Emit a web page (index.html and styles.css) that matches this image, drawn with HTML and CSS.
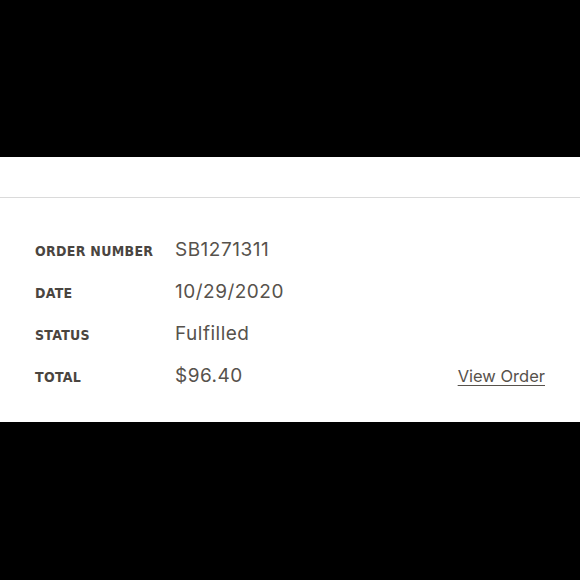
FILE: index.html
```html
<!DOCTYPE html>
<html>
<head>
<meta charset="utf-8">
<link rel="stylesheet" href="styles.css">
</head>
<body>
<div class="top"></div>
<section class="card">
  <div class="card-head"></div>
  <div class="details">
    <div class="label">Order Number</div><div class="value">SB1271311</div><div class="action"></div>
    <div class="label">Date</div><div class="value">10/29/2020</div><div class="action"></div>
    <div class="label">Status</div><div class="value">Fulfilled</div><div class="action"></div>
    <div class="label">Total</div><div class="value">$96.40</div><div class="action"><a class="link" href="#">View Order</a></div>
  </div>
</section>
</body>
</html>
```
FILE: styles.css
```css
html, body {
  margin: 0;
  padding: 0;
  background: #000;
  height: 100%;
}
.top {
  height: 157px;
}
.card {
  background: #fff;
  height: 265px;
  box-sizing: border-box;
}
.card-head {
  height: 40px;
  border-bottom: 1px solid #dadada;
}
.details {
  display: grid;
  grid-template-columns: 140px 1fr auto;
  grid-auto-rows: 42px;
  align-items: baseline;
  padding: 31px 35px 0 35px;
}
.label {
  font-family: "DejaVu Sans Condensed", "DejaVu Sans", sans-serif;
  font-weight: bold;
  font-size: 14px;
  letter-spacing: 0.3px;
  text-transform: uppercase;
  color: #4a4540;
  line-height: 42px;
}
.value {
  font-family: Inter, sans-serif;
  font-size: 19px;
  letter-spacing: 0.5px;
  color: #57524c;
  line-height: 42px;
}
.action {
  line-height: 42px;
}
.link {
  font-family: Inter, sans-serif;
  font-size: 16.5px;
  color: #57524c;
  text-decoration: underline;
  text-underline-offset: 3px;
  text-decoration-thickness: 1px;
}
```
